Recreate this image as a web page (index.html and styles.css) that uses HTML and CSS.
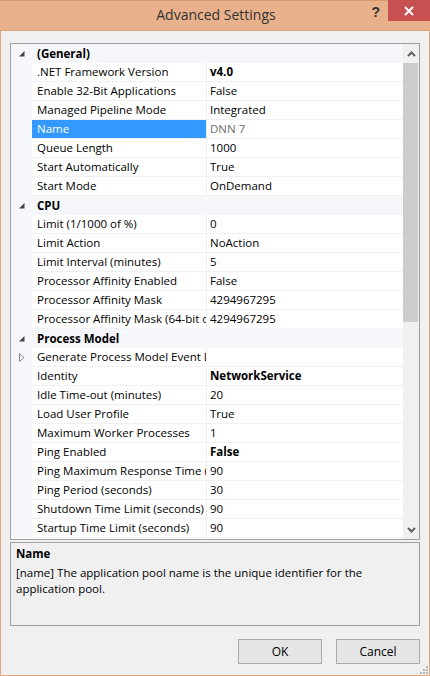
FILE: index.html
```html
<!DOCTYPE html>
<html>
<head>
<meta charset="utf-8">
<link rel="stylesheet" href="styles.css">
</head>
<body>
<div class="window">
  <div class="titlebar">
    <div class="title">Advanced Settings</div>
    <div class="help">?</div>
    <div class="close"><svg width="10" height="10" viewBox="0 0 10 10"><path d="M1 1 L9 9 M9 1 L1 9" stroke="#fff" stroke-width="2"/></svg></div>
  </div>
  <div class="content">
    <div class="grid">
      <div class="rows">
        <div class="cat"><span class="gut"><svg width="6" height="6" viewBox="0 0 6 6"><polygon points="5.5,0 5.5,5.5 0,5.5" fill="#444"/></svg></span><span class="catname">(General)</span></div>
        <div class="row"><span class="gut"></span><span class="name">.NET Framework Version</span><span class="val b">v4.0</span></div>
        <div class="row"><span class="gut"></span><span class="name">Enable 32-Bit Applications</span><span class="val">False</span></div>
        <div class="row"><span class="gut"></span><span class="name">Managed Pipeline Mode</span><span class="val">Integrated</span></div>
        <div class="row sel"><span class="gut"></span><span class="name">Name</span><span class="val ro">DNN 7</span></div>
        <div class="row"><span class="gut"></span><span class="name">Queue Length</span><span class="val">1000</span></div>
        <div class="row"><span class="gut"></span><span class="name">Start Automatically</span><span class="val">True</span></div>
        <div class="row"><span class="gut"></span><span class="name">Start Mode</span><span class="val">OnDemand</span></div>
        <div class="cat"><span class="gut"><svg width="6" height="6" viewBox="0 0 6 6"><polygon points="5.5,0 5.5,5.5 0,5.5" fill="#444"/></svg></span><span class="catname">CPU</span></div>
        <div class="row"><span class="gut"></span><span class="name">Limit (1/1000 of %)</span><span class="val">0</span></div>
        <div class="row"><span class="gut"></span><span class="name">Limit Action</span><span class="val">NoAction</span></div>
        <div class="row"><span class="gut"></span><span class="name">Limit Interval (minutes)</span><span class="val">5</span></div>
        <div class="row"><span class="gut"></span><span class="name">Processor Affinity Enabled</span><span class="val">False</span></div>
        <div class="row"><span class="gut"></span><span class="name">Processor Affinity Mask</span><span class="val">4294967295</span></div>
        <div class="row"><span class="gut"></span><span class="name">Processor Affinity Mask (64-bit option)</span><span class="val">4294967295</span></div>
        <div class="cat"><span class="gut"><svg width="6" height="6" viewBox="0 0 6 6"><polygon points="5.5,0 5.5,5.5 0,5.5" fill="#444"/></svg></span><span class="catname">Process Model</span></div>
        <div class="row"><span class="gut"><svg width="6" height="9" viewBox="0 0 6 9"><polygon points="0.5,0.5 5,4.5 0.5,8.5" fill="none" stroke="#8a8a8a" stroke-width="1"/></svg></span><span class="name">Generate Process Model Event Log Entry</span><span class="val"></span></div>
        <div class="row"><span class="gut"></span><span class="name">Identity</span><span class="val b">NetworkService</span></div>
        <div class="row"><span class="gut"></span><span class="name">Idle Time-out (minutes)</span><span class="val">20</span></div>
        <div class="row"><span class="gut"></span><span class="name">Load User Profile</span><span class="val">True</span></div>
        <div class="row"><span class="gut"></span><span class="name">Maximum Worker Processes</span><span class="val">1</span></div>
        <div class="row"><span class="gut"></span><span class="name">Ping Enabled</span><span class="val b">False</span></div>
        <div class="row"><span class="gut"></span><span class="name">Ping Maximum Response Time (seconds)</span><span class="val">90</span></div>
        <div class="row"><span class="gut"></span><span class="name">Ping Period (seconds)</span><span class="val">30</span></div>
        <div class="row"><span class="gut"></span><span class="name">Shutdown Time Limit (seconds)</span><span class="val">90</span></div>
        <div class="row"><span class="gut"></span><span class="name">Startup Time Limit (seconds)</span><span class="val">90</span></div>
      </div>
      <div class="scrollbar">
        <div class="arrow"><svg width="9" height="6" viewBox="0 0 9 6"><path d="M1 5 L4.5 1.5 L8 5" fill="none" stroke="#606060" stroke-width="2"/></svg></div>
        <div class="track"><div class="thumb"></div></div>
        <div class="arrow"><svg width="9" height="6" viewBox="0 0 9 6"><path d="M1 1 L4.5 4.5 L8 1" fill="none" stroke="#606060" stroke-width="2"/></svg></div>
      </div>
    </div>
    <div class="desc">
      <div class="desc-title">Name</div>
      <div class="desc-text">[name] The application pool name is the unique identifier for the application pool.</div>
    </div>
    <div class="buttons">
      <button class="btn">OK</button>
      <button class="btn">Cancel</button>
    </div>
  </div>
  <svg class="grip" width="10" height="10" viewBox="0 0 10 10">
    <rect x="8" y="2" width="2" height="2" fill="#b8b8b8"/>
    <rect x="5" y="5" width="2" height="2" fill="#b8b8b8"/>
    <rect x="8" y="5" width="2" height="2" fill="#b8b8b8"/>
    <rect x="2" y="8" width="2" height="2" fill="#b8b8b8"/>
    <rect x="5" y="8" width="2" height="2" fill="#b8b8b8"/>
    <rect x="8" y="8" width="2" height="2" fill="#b8b8b8"/>
  </svg>
</div>
</body>
</html>
```
FILE: styles.css
```css
* { box-sizing: border-box; }
html, body { margin: 0; padding: 0; }
body {
  font-family: "Open Sans", "Noto Sans", "Liberation Sans", sans-serif;
  font-size: 11.5px;
  color: #000;
  background: #f0f0f0;
}
.window {
  position: relative;
  width: 430px;
  height: 676px;
  background: #f0f0f0;
  border: 1px solid #e3a77e;
  border-top: none;
  display: flex;
  flex-direction: column;
}
.titlebar {
  height: 31px;
  margin: 0 -1px;
  background: #e9b18b;
  border-top: 1px solid #d89a70;
  border-bottom: 1px solid #d9a27b;
  display: flex;
  align-items: flex-start;
  position: relative;
}
.title {
  flex: 1;
  text-align: center;
  font-size: 14px;
  line-height: 28px;
  color: #333;
  padding-left: 2px;
}
.help {
  position: absolute;
  right: 50px;
  top: 3px;
  font-size: 14px;
  font-weight: bold;
  color: #333;
  font-family: "Liberation Sans", sans-serif;
}
.close {
  position: absolute;
  right: 0;
  top: -1px;
  width: 42px;
  height: 21px;
  background: #c75050;
  display: flex;
  align-items: center;
  justify-content: center;
}
.content {
  flex: 1;
  display: flex;
  flex-direction: column;
  padding: 12px 9px 0 9px;
}
.grid {
  height: 497px;
  border: 1px solid #a0a0a0;
  display: flex;
  background: #fff;
}
.rows {
  flex: 1;
  overflow: hidden;
  display: flex;
  flex-direction: column;
}
.row, .cat {
  height: 19px;
  display: flex;
  flex: none;
}
.gut {
  width: 21px;
  flex: none;
  background: #f5f7fb;
  display: flex;
  align-items: center;
  justify-content: center;
}
.cat { background: #f5f7fb; }
.catname {
  font-weight: bold;
  line-height: 19px;
  padding-left: 5px;
}
.name {
  width: 175px;
  flex: none;
  border-right: 1px solid #eef0f4;
  border-bottom: 1px solid #eef0f4;
  padding-left: 5px;
  line-height: 18px;
  white-space: nowrap;
  overflow: hidden;
}
.val {
  flex: 1;
  border-bottom: 1px solid #eef0f4;
  padding-left: 3px;
  line-height: 18px;
  white-space: nowrap;
  overflow: hidden;
}
.b { font-weight: bold; }
.sel .name { background: #3399ff; color: #fff; }
.ro { color: #6d6d6d; }
.scrollbar {
  width: 16px;
  flex: none;
  background: #f0f0f0;
  display: flex;
  flex-direction: column;
}
.arrow {
  height: 19px;
  display: flex;
  align-items: center;
  justify-content: center;
}
.track { flex: 1; }
.thumb {
  width: 15px;
  height: 259px;
  background: #cdcdcd;
}
.desc {
  margin-top: 2px;
  height: 84px;
  border: 1px solid #a0a0a0;
  padding: 3px 5px;
  line-height: 16px;
}
.desc-title { font-weight: bold; margin-bottom: 3px; }
.buttons {
  display: flex;
  justify-content: flex-end;
  gap: 14px;
  margin-top: 13px;
}
.btn {
  width: 84px;
  height: 25px;
  border: 1px solid #acacac;
  background: #e5e5e5;
  font-family: inherit;
  font-size: 12px;
  color: #000;
  padding: 0;
}
.grip {
  position: absolute;
  right: 1px;
  bottom: 1px;
}
```
